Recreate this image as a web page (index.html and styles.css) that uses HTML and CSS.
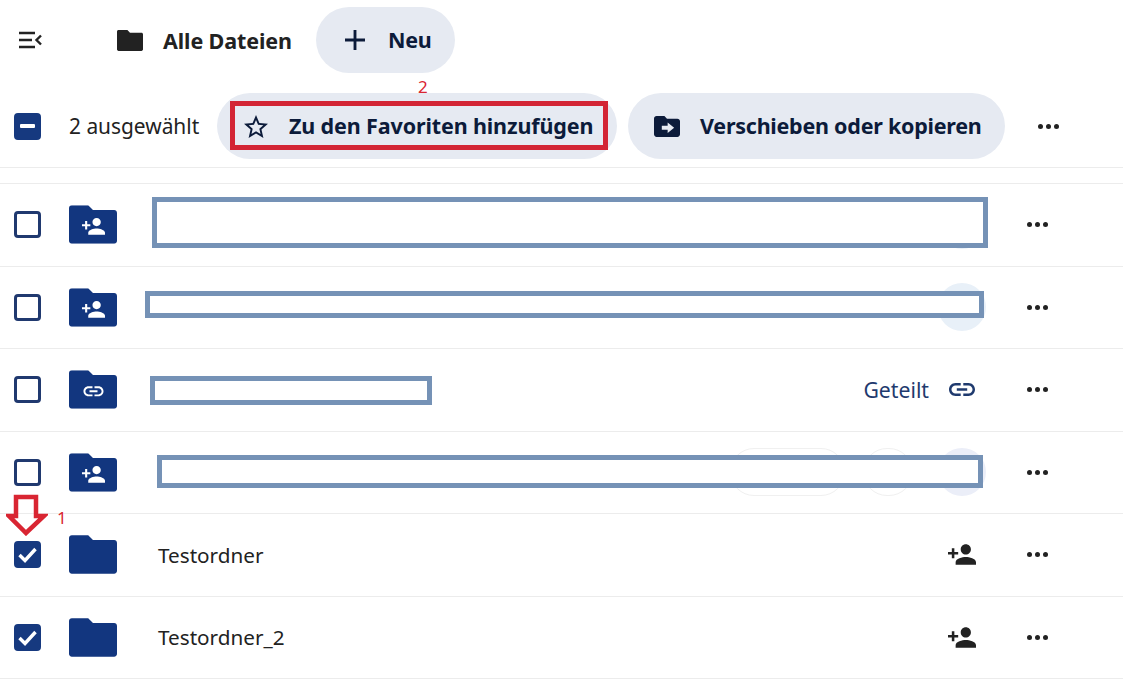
FILE: index.html
```html
<!DOCTYPE html>
<html>
<head>
    <title>Alle Dateien</title>
    <link rel="stylesheet" href="styles.css">
</head>
<body>
    <svg class="icon-defs">
        <symbol id="i-folder" viewBox="2 4 20 16">
            <path d="M10 4H3.2C2.5 4 2 4.500 2 5.2v13.6c0 .7.500 1.200 1.200 1.200h17.600c.7 0 1.200-.500 1.200-1.200V7.200c0-.7-.500-1.200-1.200-1.200H12l-2-2z"/>
        </symbol>
        <symbol id="i-person-add" viewBox="1 4 22 16">
            <path d="M15 12c2.21 0 4-1.79 4-4s-1.79-4-4-4-4 1.79-4 4 1.79 4 4 4zm-9-2V7H4v3H1v2h3v3h2v-3h3v-2H6zm9 4c-2.67 0-8 1.34-8 4v2h16v-2c0-2.66-5.33-4-8-4z"/>
        </symbol>
        <symbol id="i-link" viewBox="2 7 20 10">
            <path d="M3.9 12c0-1.71 1.39-3.1 3.1-3.1h4V7H7c-2.76 0-5 2.24-5 5s2.24 5 5 5h4v-1.9H7c-1.71 0-3.1-1.39-3.1-3.1zM8 13h8v-2H8v2zm9-6h-4v1.9h4c1.71 0 3.1 1.39 3.1 3.1s-1.39 3.1-3.1 3.1h-4V17h4c2.76 0 5-2.24 5-5s-2.24-5-5-5z"/>
        </symbol>
        <symbol id="i-more" viewBox="0 0 21 5">
            <circle cx="2.5" cy="2.5" r="2.5"/>
            <circle cx="10.5" cy="2.5" r="2.5"/>
            <circle cx="18.5" cy="2.5" r="2.5"/>
        </symbol>
        <symbol id="i-check" viewBox="0 0 27 27">
            <path d="M5.500 14l5.500 5.500 10.500-11.500" fill="none" stroke="#fff" stroke-width="3.400"/>
        </symbol>
        <symbol id="i-folder-person" viewBox="2 4 20 16">
            <use href="#i-folder" x="2" y="4" width="20" height="16"/>
            <path fill="#fff" transform="translate(6.97 7.52) scale(.436)" d="M15 12c2.21 0 4-1.79 4-4s-1.79-4-4-4-4 1.79-4 4 1.79 4 4 4zm-9-2V7H4v3H1v2h3v3h2v-3h3v-2H6zm9 4c-2.67 0-8 1.34-8 4v2h16v-2c0-2.66-5.33-4-8-4z"/>
        </symbol>
        <symbol id="i-folder-link" viewBox="2 4 20 16">
            <use href="#i-folder" x="2" y="4" width="20" height="16"/>
            <path fill="#fff" transform="translate(7.2 7.75) scale(.417)" d="M3.9 12c0-1.71 1.39-3.1 3.1-3.1h4V7H7c-2.76 0-5 2.24-5 5s2.24 5 5 5h4v-1.9H7c-1.71 0-3.1-1.39-3.1-3.1zM8 13h8v-2H8v2zm9-6h-4v1.9h4c1.71 0 3.1 1.39 3.1 3.1s-1.39 3.1-3.1 3.1h-4V17h4c2.76 0 5-2.24 5-5s-2.24-5-5-5z"/>
        </symbol>
    </svg>

    <div class="topbar">
        <svg class="menu-icon" viewBox="0 0 24 18">
            <path d="M1 2h16M1 9h13M1 16h16" fill="none" stroke="#222" stroke-width="2.400"/>
            <path d="M23 4.500l-4.500 4.500 4.500 4.500" fill="none" stroke="#222" stroke-width="2.400"/>
        </svg>
        <svg class="top-folder"><use href="#i-folder"/></svg>
        <span class="top-title">Alle Dateien</span>
        <button class="pill pill-new">
            <svg class="plus-icon" viewBox="5 5 14 14"><path d="M19 13h-6v6h-2v-6H5v-2h6V5h2v6h6v2z"/></svg>
            <span>Neu</span>
        </button>
    </div>

    <div class="selectbar">
        <div class="checkbox checked"><span class="minus"></span></div>
        <span class="count">2 ausgewählt</span>
        <button class="pill pill-fav">
            <svg class="star-icon" viewBox="2 2 20 19"><path d="M22 9.24l-7.19-.62L12 2 9.19 8.63 2 9.24l5.46 4.73L5.82 21 12 17.27 18.18 21l-1.63-7.03L22 9.24zM12 15.4l-3.76 2.27 1-4.28-3.32-2.88 4.38-.38L12 6.1l1.71 4.04 4.38.38-3.32 2.88 1 4.28L12 15.4z"/></svg>
            <span>Zu den Favoriten hinzufügen</span>
        </button>
        <button class="pill pill-move">
            <svg class="move-icon" viewBox="2 4 20 16"><path d="M20 6h-8l-2-2H4c-1.100 0-2 .9-2 2v12c0 1.100.9 2 2 2h16c1.100 0 2-.9 2-2V8c0-1.100-.9-2-2-2zm-7.500 11v-2.500H8v-3h4.500V9l5 4-5 4z"/></svg>
            <span>Verschieben oder kopieren</span>
        </button>
        <svg class="more more-head"><use href="#i-more"/></svg>
    </div>

    <div class="list">
        <div class="row">
            <div class="checkbox"></div>
            <svg class="row-folder"><use href="#i-folder-person"/></svg>
            <div class="row-actions">
                <span class="ghost-circle blue"></span>
            </div>
            <svg class="more"><use href="#i-more"/></svg>
        </div>
        <div class="row">
            <div class="checkbox"></div>
            <svg class="row-folder"><use href="#i-folder-person"/></svg>
            <div class="row-actions">
                <span class="ghost-circle blue"></span>
            </div>
            <svg class="more"><use href="#i-more"/></svg>
        </div>
        <div class="row">
            <div class="checkbox"></div>
            <svg class="row-folder"><use href="#i-folder-link"/></svg>
            <div class="row-actions">
                <span class="shared">Geteilt</span>
                <svg class="link-icon"><use href="#i-link"/></svg>
            </div>
            <svg class="more"><use href="#i-more"/></svg>
        </div>
        <div class="row">
            <div class="checkbox"></div>
            <svg class="row-folder"><use href="#i-folder-person"/></svg>
            <div class="row-actions">
                <span class="ghost-pill wide"></span>
                <span class="ghost-pill narrow"></span>
                <span class="ghost-circle lilac"></span>
            </div>
            <svg class="more"><use href="#i-more"/></svg>
        </div>
        <div class="row">
            <div class="checkbox checked"><svg class="check-icon"><use href="#i-check"/></svg></div>
            <svg class="row-folder"><use href="#i-folder"/></svg>
            <span class="row-name">Testordner</span>
            <div class="row-actions">
                <svg class="share-icon"><use href="#i-person-add"/></svg>
            </div>
            <svg class="more"><use href="#i-more"/></svg>
        </div>
        <div class="row">
            <div class="checkbox checked"><svg class="check-icon"><use href="#i-check"/></svg></div>
            <svg class="row-folder"><use href="#i-folder"/></svg>
            <span class="row-name">Testordner_2</span>
            <div class="row-actions">
                <svg class="share-icon"><use href="#i-person-add"/></svg>
            </div>
            <svg class="more"><use href="#i-more"/></svg>
        </div>
    </div>

    <!-- markings drawn over the screenshot -->
    <div class="redact redact-1"></div>
    <div class="redact redact-2"></div>
    <div class="redact redact-3"></div>
    <div class="redact redact-4"></div>
    <div class="mark-box"></div>
    <span class="mark-num num-2">2</span>
    <span class="mark-num num-1">1</span>
    <svg class="mark-arrow" viewBox="0 0 42 42">
        <path d="M10 3h20v19h8L20 39 3 22h7z" fill="none" stroke="#d92532" stroke-width="4.500"/>
    </svg>
</body>
</html>
```

FILE: styles.css
```css
body {
    font-family: "Noto Sans", Arial, sans-serif;
    background-color: #fff;
    color: #222;
    margin: 0;
    padding: 0;
    position: relative;
    overflow: hidden;
}
button {
    font-family: inherit;
    border: none;
    padding: 0;
}
.icon-defs {
    width: 0;
    height: 0;
    position: absolute;
}
.topbar {
    display: flex;
    align-items: center;
    height: 66px;
    margin-top: 7px;
    padding-left: 18px;
}
.menu-icon {
    width: 24px;
    height: 18px;
}
.top-folder {
    width: 26px;
    height: 21px;
    margin-left: 75px;
    fill: #222;
}
.top-title {
    font-size: 21.500px;
    font-weight: 700;
    letter-spacing: -0.1px;
    margin-left: 20px;
    width: 153px;
    white-space: nowrap;
}
.pill {
    display: flex;
    align-items: center;
    height: 66px;
    border-radius: 33px;
    background-color: #e6eaf2;
    color: #0c1b3a;
    font-size: 21.500px;
    font-weight: 700;
    letter-spacing: -0.25px;
    white-space: nowrap;
}
.pill span {
    position: relative;
    top: -1px;
}
.pill-new {
    width: 139px;
    padding-left: 29px;
}
.plus-icon {
    width: 20px;
    height: 20px;
    margin-right: 23px;
    fill: #0c1b3a;
}
.selectbar {
    display: flex;
    align-items: center;
    height: 66px;
    margin-top: 20px;
    padding: 0 0 8px 13.500px;
    border-bottom: 1px solid #ececec;
}
.count {
    font-size: 20.900px;
    margin-left: 28.500px;
    width: 148px;
    white-space: nowrap;
}
.pill-fav {
    width: 400px;
    padding-left: 27px;
    letter-spacing: -0.13px;
}
.star-icon {
    width: 24px;
    height: 23px;
    margin-right: 21px;
    fill: #0c1b3a;
}
.pill-move {
    width: 377px;
    margin-left: 11px;
    padding-left: 26px;
}
.move-icon {
    width: 26px;
    height: 21px;
    margin-right: 20px;
    fill: #0c1b3a;
}
.more {
    width: 21px;
    height: 5px;
    fill: #222;
    flex-shrink: 0;
}
.more-head {
    margin-left: 33px;
}
.list {
    margin-top: 15px;
    border-top: 1px solid #ececec;
}
.row {
    display: flex;
    align-items: center;
    box-sizing: border-box;
    height: 82.500px;
    padding: 0 75px 0 13.500px;
    border-bottom: 1px solid #ececec;
}
.checkbox {
    width: 27px;
    height: 27px;
    box-sizing: border-box;
    border: 3px solid #20396f;
    border-radius: 4px;
    flex-shrink: 0;
    display: flex;
    align-items: center;
    justify-content: center;
}
.checkbox.checked {
    background-color: #16397f;
    border-color: #16397f;
}
.minus {
    width: 15px;
    height: 4px;
    border-radius: 1px;
    background-color: #fff;
}
.check-icon {
    width: 27px;
    height: 27px;
    flex-shrink: 0;
}
.row-folder {
    width: 48px;
    height: 39px;
    margin-left: 28.500px;
    fill: #12367f;
    flex-shrink: 0;
}
.row-name {
    font-size: 20.700px;
    margin-left: 41px;
}
.row-actions {
    display: flex;
    align-items: center;
    justify-content: flex-end;
    margin-left: auto;
    margin-right: 41px;
}
.ghost-circle {
    width: 48px;
    height: 48px;
    border-radius: 50%;
}
.ghost-circle.blue {
    background-color: #e8f0f8;
}
.ghost-circle.lilac {
    background-color: #ebeef8;
}
.ghost-pill {
    box-sizing: border-box;
    height: 48px;
    border: 1px solid #f0f0f0;
    border-radius: 24px;
}
.ghost-pill.wide {
    width: 115px;
}
.ghost-pill.narrow {
    width: 50px;
    margin: 0 25px 0 18px;
}
.shared {
    font-size: 21.200px;
    color: #1f3a6e;
    margin-right: 20px;
}
.link-icon {
    width: 26px;
    height: 13px;
    fill: #1f3a6e;
    margin-right: 11px;
}
.share-icon {
    width: 28px;
    height: 21px;
    fill: #222;
    margin-right: 10px;
}
.redact {
    position: absolute;
    box-sizing: border-box;
    border: 5px solid #7592b6;
    background-color: #fff;
}
.redact-1 {
    left: 152px;
    top: 197px;
    width: 836px;
    height: 51px;
}
.redact-2 {
    left: 145px;
    top: 291px;
    width: 839px;
    height: 27px;
}
.redact-3 {
    left: 150px;
    top: 376px;
    width: 282px;
    height: 29px;
}
.redact-4 {
    left: 157px;
    top: 455px;
    width: 826px;
    height: 33px;
}
.mark-box {
    position: absolute;
    left: 230px;
    top: 101px;
    width: 378px;
    height: 49px;
    box-sizing: border-box;
    border: 5px solid #d32535;
}
.mark-num {
    position: absolute;
    font-size: 17px;
    color: #d92532;
    line-height: 18px;
}
.num-2 {
    left: 418px;
    top: 78px;
}
.num-1 {
    left: 57px;
    top: 509px;
}
.mark-arrow {
    position: absolute;
    left: 6px;
    top: 494px;
    width: 42px;
    height: 42px;
}
```
